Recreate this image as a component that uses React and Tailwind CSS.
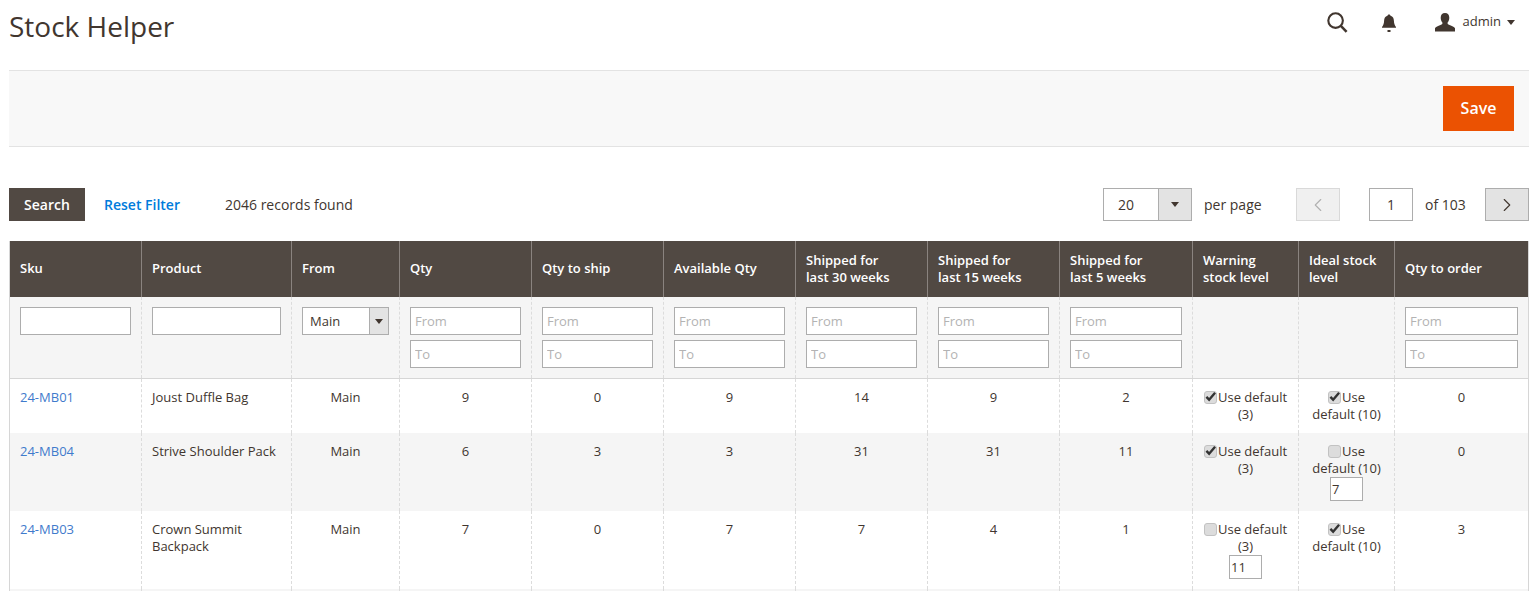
import { ChevronLeft, ChevronRight } from 'lucide-react'

const rows = [
  { sku: '24-MB01', product: 'Joust Duffle Bag', vals: [9, 0, 9, 14, 9, 2], warn: true, ideal: true, order: 0, h: 'h-[55px]', bg: 'bg-white' },
  { sku: '24-MB04', product: 'Strive Shoulder Pack', vals: [6, 3, 3, 31, 31, 11], warn: true, ideal: false, idealVal: '7', order: 0, h: 'h-[78px]', bg: 'bg-[#f5f5f5]' },
  { sku: '24-MB03', product: 'Crown Summit Backpack', vals: [7, 0, 7, 7, 4, 1], warn: false, warnVal: '11', ideal: true, order: 3, h: 'h-[78px]', bg: 'bg-white' },
]

const headers = [
  ['Sku'],
  ['Product'],
  ['From'],
  ['Qty'],
  ['Qty to ship'],
  ['Available Qty'],
  ['Shipped for', 'last 30 weeks'],
  ['Shipped for', 'last 15 weeks'],
  ['Shipped for', 'last 5 weeks'],
  ['Warning', 'stock level'],
  ['Ideal stock', 'level'],
  ['Qty to order'],
]

const widths = ['w-[132px]', 'w-[150px]', 'w-[108px]', 'w-[132px]', 'w-[132px]', 'w-[132px]', 'w-[132px]', 'w-[132px]', 'w-[133px]', 'w-[106px]', 'w-[96px]', 'w-[134px]']

function Caret({ className }) {
  return <span className={`inline-block w-0 h-0 border-x-[4px] border-x-transparent border-t-[5px] ${className}`}></span>
}

function Check({ on }) {
  return (
    <span className="inline-block align-[-2px] mr-[1px] w-[13px] h-[13px] rounded-[3px] bg-[#dcdcdc] border border-[#c2c2c2] relative">
      {on && (
        <svg className="absolute left-0 top-[-1px] w-[11px] h-[11px]" viewBox="0 0 12 12">
          <path d="M1.500 6.500l3 3L11 2" fill="none" stroke="#333" strokeWidth="2.600" />
        </svg>
      )}
    </span>
  )
}

function RangeFilter() {
  return (
    <div className="flex flex-col gap-[5px]">
      <input placeholder="From" className="w-full h-[28px] bg-white border border-[#adadad] px-[4px] text-[13px] placeholder:text-[#b3b3b3] outline-none" />
      <input placeholder="To" className="w-full h-[28px] bg-white border border-[#adadad] px-[4px] text-[13px] placeholder:text-[#b3b3b3] outline-none" />
    </div>
  )
}

function SmallInput({ value }) {
  return <input readOnly value={value} className="block mx-auto w-[33px] h-[24px] bg-white border border-[#adadad] px-[1px] text-[13px] text-[#41362f] outline-none" />
}

const tdBorder = 'border-l border-dashed border-[#dcdcdc] first:border-l-0 align-top'

export default function App() {
  return (
    <div className="w-[1540px] h-[591px] overflow-hidden bg-white pl-[9px] pr-[11px] text-[#41362f] font-['Open_Sans',sans-serif]">
      {/* Titre + actions admin */}
      <div className="h-[70px] flex items-start justify-between">
        <h1 className="mt-[6px] text-[28px] leading-[40px] font-normal text-[#41362f]">Stock Helper</h1>
        <div className="flex items-center mt-[11px] mr-[14px]">
          <svg className="w-[23px] h-[23px] mr-[31px]" viewBox="0 0 24 24">
            <circle cx="10" cy="10" r="7.600" fill="none" stroke="#41362f" strokeWidth="2.200" />
            <path d="M15.500 15.500l6 6.300" fill="none" stroke="#41362f" strokeWidth="2.600" />
          </svg>
          <svg className="w-[18px] h-[20px] mr-[37px]" viewBox="0 0 18 20">
            <path d="M9 1.500c1 0 1.400.6 1.500 1.300 2.400.7 3.300 2.600 3.400 5 .1 2.800.8 4.700 2.100 6.200v.8H2v-.8c1.300-1.500 2-3.400 2.100-6.200.1-2.400 1-4.300 3.400-5C7.600 2.100 8 1.500 9 1.500z" fill="#41362f" />
            <rect x="7.500" y="17" width="3" height="2" fill="#41362f" />
          </svg>
          <svg className="w-[20px] h-[19px] mr-[8px]" viewBox="0 0 20 19">
            <path d="M10 0c2.800 0 4.300 2 4.300 4.800 0 2-.7 3.800-1.800 5 0 1.200.5 1.700 2 2.300 2.500 1 4.800 1.700 5.500 3.200V18.500H0v-3.200c.7-1.500 3-2.200 5.500-3.200 1.500-.6 2-1.100 2-2.300-1.100-1.200-1.800-3-1.800-5C5.700 2 7.200 0 10 0z" fill="#41362f" />
          </svg>
          <span className="pb-[2px] text-[13px] text-[#41362f]">admin</span>
          <Caret className="ml-[6px] mb-[1px] border-t-[#41362f]" />
        </div>
      </div>

      {/* Barre d'actions */}
      <div className="h-[77px] bg-[#f8f8f8] border-y border-[#e3e3e3] flex items-center justify-end pr-[15px]">
        <button className="w-[71px] h-[45px] pb-[2px] bg-[#eb5202] text-white text-[16px] font-semibold">Save</button>
      </div>

      {/* Toolbar */}
      <div className="mt-[41px] h-[33px] flex items-center text-[14px]">
        <button className="w-[76px] h-[33px] bg-[#514943] text-white font-semibold">Search</button>
        <a href="#" className="ml-[19px] text-[#007bdb] font-semibold">Reset Filter</a>
        <span className="ml-[45px]">2046 records found</span>
        <div className="ml-auto flex items-center">
          <div className="flex w-[89px] h-[33px] border border-[#adadad] bg-white">
            <span className="flex-1 flex items-center pl-[14px]">20</span>
            <span className="w-[33px] bg-[#e3e3e3] border-l border-[#adadad] flex items-center justify-center">
              <Caret className="border-t-[#41362f]" />
            </span>
          </div>
          <span className="ml-[12px] w-[92px]">per page</span>
          <button className="w-[44px] h-[33px] bg-[#f0f0f0] border border-[#d9d9d9] flex items-center justify-center">
            <ChevronLeft className="w-[22px] h-[22px] text-[#b0b0b0]" strokeWidth={1.25} />
          </button>
          <input readOnly value="1" className="ml-[29px] w-[44px] h-[33px] border border-[#adadad] text-center outline-none" />
          <span className="ml-[12px] w-[60px]">of 103</span>
          <button className="w-[44px] h-[33px] bg-[#e3e3e3] border border-[#adadad] flex items-center justify-center">
            <ChevronRight className="w-[22px] h-[22px] text-[#41362f]" strokeWidth={1.25} />
          </button>
        </div>
      </div>

      {/* Grille */}
      <table className="mt-[20px] w-[1519px] table-fixed border-collapse border-x border-[#d6d6d6] text-[13px] leading-[17px]">
        <colgroup>
          {widths.map((w, i) => <col key={i} className={w} />)}
        </colgroup>
        <thead>
          <tr className="h-[56px] bg-[#514943] text-white">
            {headers.map((h, i) => (
              <th key={i} className={`border-l border-[#8a837f] first:border-l-0 pl-[10px] pr-[4px] text-left font-semibold align-middle ${h.length === 1 ? 'pb-[2px]' : ''}`}>
                {h.map((l) => <div key={l}>{l}</div>)}
              </th>
            ))}
          </tr>
        </thead>
        <tbody>
          <tr className="h-[81px] bg-[#f5f5f5] border-b border-[#d6d6d6]">
            <td className={`${tdBorder} px-[10px] pt-[10px]`}>
              <input className="w-full h-[28px] bg-white border border-[#adadad] outline-none" />
            </td>
            <td className={`${tdBorder} px-[10px] pt-[10px]`}>
              <input className="w-full h-[28px] bg-white border border-[#adadad] outline-none" />
            </td>
            <td className={`${tdBorder} px-[10px] pt-[10px]`}>
              <div className="flex h-[28px] bg-white border border-[#adadad]">
                <span className="flex-1 pl-[7px] leading-[26px]">Main</span>
                <span className="w-[19px] bg-[#e3e3e3] border-l border-[#adadad] flex items-center justify-center">
                  <Caret className="border-t-[#41362f]" />
                </span>
              </div>
            </td>
            {[0, 1, 2, 3, 4, 5].map((i) => (
              <td key={i} className={`${tdBorder} px-[10px] pt-[10px]`}><RangeFilter /></td>
            ))}
            <td className={tdBorder}></td>
            <td className={tdBorder}></td>
            <td className={`${tdBorder} px-[10px] pt-[10px]`}><RangeFilter /></td>
          </tr>
          {rows.map((r) => (
            <tr key={r.sku} className={`${r.h} ${r.bg}`}>
              <td className={`${tdBorder} px-[10px] pt-[10px]`}>
                <a href="#" className="text-[#3f7bcc]">{r.sku}</a>
              </td>
              <td className={`${tdBorder} px-[10px] pt-[10px]`}>{r.product}</td>
              <td className={`${tdBorder} px-[10px] pt-[10px] text-center`}>Main</td>
              {r.vals.map((v, i) => (
                <td key={i} className={`${tdBorder} px-[10px] pt-[10px] text-center`}>{v}</td>
              ))}
              <td className={`${tdBorder} px-[10px] pt-[10px] text-center`}>
                <Check on={r.warn} />
                Use default (3)
                {r.warnVal && <SmallInput value={r.warnVal} />}
              </td>
              <td className={`${tdBorder} px-[10px] pt-[10px] text-center`}>
                <Check on={r.ideal} />
                Use default (10)
                {r.idealVal && <SmallInput value={r.idealVal} />}
              </td>
              <td className={`${tdBorder} px-[10px] pt-[10px] text-center`}>{r.order}</td>
            </tr>
          ))}
          <tr className="h-[20px] bg-[#f5f5f5]">
            {widths.map((w, i) => <td key={i} className={tdBorder}></td>)}
          </tr>
        </tbody>
      </table>
    </div>
  )
}
